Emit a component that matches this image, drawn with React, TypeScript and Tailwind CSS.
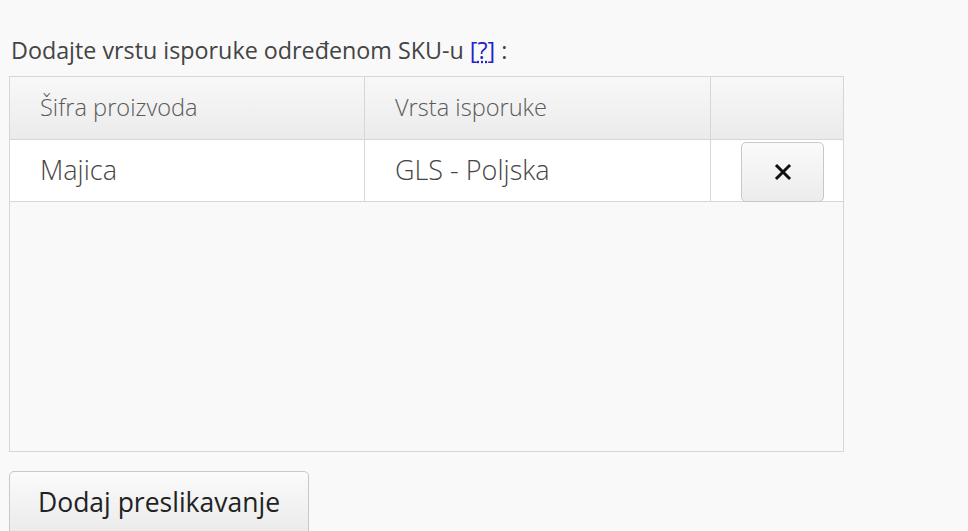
import React from "react";

const FONT = "font-['Open_Sans','Noto_Sans',sans-serif]";

export default function App() {
  return (
    <div className={`min-h-[531px] w-[968px] overflow-hidden bg-[#f9f9f9] pl-[9px] pt-[35px] ${FONT}`}>
      <p className="ml-[2px] text-[23.3px] leading-[30px] text-[#444]">
        Dodajte vrstu isporuke određenom SKU-u{" "}
        <a href="#" className="text-[#2323c8]">
          [<span className="underline decoration-dotted underline-offset-2">?</span>]
        </a>{" "}
        :
      </p>

      <div className="mt-[11px] h-[376px] w-[835px] border border-[#d6d6d6] bg-[#f9f9f9]">
        <div className="grid h-[63px] grid-cols-[355px_346px_132px] border-b border-[#d6d6d6] bg-gradient-to-b from-[#f8f8f8] to-[#ebebeb]">
          <div className="flex items-center border-r border-[#d6d6d6] pl-[30px] text-[23.6px] font-light text-[#5a5a5a]">
            Šifra proizvoda
          </div>
          <div className="flex items-center border-r border-[#d6d6d6] pl-[30px] text-[23.6px] font-light text-[#5a5a5a]">
            Vrsta isporuke
          </div>
          <div />
        </div>

        <div className="grid h-[62px] grid-cols-[355px_346px_132px] border-b border-[#d6d6d6] bg-white">
          <div className="flex items-center border-r border-[#d6d6d6] pl-[30px] text-[27px] font-light text-[#444]">
            Majica
          </div>
          <div className="flex items-center border-r border-[#d6d6d6] pl-[30px] text-[27px] font-light text-[#444]">
            GLS - Poljska
          </div>
          <div className="relative">
            <button
              type="button"
              className="absolute left-[30px] top-[2px] flex h-[60px] w-[83px] items-center justify-center rounded-[5px] border border-[#c8c8c8] bg-gradient-to-b from-[#fafafa] to-[#ececec]"
            >
              <svg width="18" height="18" viewBox="0 0 18 18">
                <path d="M3 3 L15 15 M15 3 L3 15" stroke="#111" strokeWidth="3" strokeLinecap="square" />
              </svg>
            </button>
          </div>
        </div>
      </div>

      <button
        type="button"
        className="mt-[19px] h-[72px] w-[300px] rounded-[5px] border border-[#c8c8c8] bg-gradient-to-b from-[#fbfbfb] to-[#e8e8e8] pb-[8px] text-[26.5px] text-[#222]"
      >
        Dodaj preslikavanje
      </button>
    </div>
  );
}
